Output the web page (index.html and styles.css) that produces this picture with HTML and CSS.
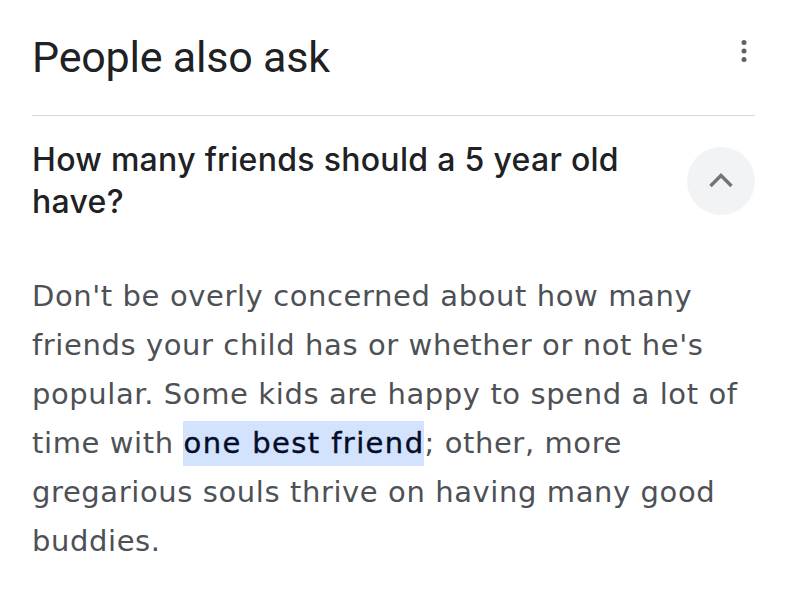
FILE: index.html
```html
<!DOCTYPE html>
<html lang="en">
<head>
<meta charset="utf-8">
<title>People also ask</title>
<link rel="stylesheet" href="styles.css">
</head>
<body>
<div class="paa">
  <div class="paa-head">
    <h2 class="paa-title">People also ask</h2>
    <button class="icon-btn more" aria-label="More options">
      <svg width="12" height="30" viewBox="0 0 12 30"><circle cx="6" cy="6.5" r="2.5"/><circle cx="6" cy="15" r="2.5"/><circle cx="6" cy="23.5" r="2.5"/></svg>
    </button>
  </div>
  <div class="divider"></div>
  <div class="question">
    <div class="q-text">How many friends should a 5 year old have?</div>
    <button class="toggle" aria-label="Collapse">
      <svg width="30" height="20" viewBox="0 0 30 20"><polyline points="4.5,15 15,4.5 25.5,15" fill="none" stroke="#70757a" stroke-width="3.4"/></svg>
    </button>
  </div>
  <p class="answer">Don't be overly concerned about how many friends your child has or whether or not he's popular. Some kids are happy to spend a lot of time with <span class="hl">one best friend</span>; other, more gregarious souls thrive on having many good buddies.</p>
</div>
</body>
</html>
```
FILE: styles.css
```css
html, body {
  margin: 0;
  padding: 0;
  background: #fff;
}
.paa {
  padding: 0 31px 0 32px;
  font-family: Roboto, "Noto Sans", sans-serif;
}
.paa-head {
  display: flex;
  align-items: center;
  justify-content: space-between;
  padding-top: 31px;
}
.paa-title {
  margin: 0;
  font-size: 43px;
  line-height: 52px;
  font-weight: 400;
  letter-spacing: -0.2px;
  color: #202124;
}
.icon-btn {
  border: 0;
  background: none;
  padding: 0;
  margin-right: 5px;
  margin-top: -12px;
  display: flex;
  fill: #5f6368;
}
.divider {
  height: 1px;
  background: #d6d8db;
  margin-top: 32px;
}
.question {
  display: flex;
  align-items: center;
  justify-content: space-between;
  gap: 40px;
  padding-top: 23px;
}
.q-text {
  font-family: Inter, Roboto, sans-serif;
  font-size: 32px;
  line-height: 42px;
  font-weight: 500;
  letter-spacing: 0.3px;
  color: #202124;
  flex: 1;
}
.toggle {
  width: 68px;
  height: 68px;
  border-radius: 50%;
  border: 0;
  background: #f1f3f4;
  padding: 0;
  display: flex;
  align-items: center;
  justify-content: center;
  flex: none;
}
.answer {
  margin: 49px 0 0;
  font-family: "DejaVu Sans", sans-serif;
  font-size: 29px;
  line-height: 49px;
  letter-spacing: 0.6px;
  color: #4d5156;
}
.hl {
  background: #d3e3fd;
  color: #040c28;
  letter-spacing: 1.4px;
  -webkit-text-stroke: 0.4px #040c28;
  padding: 5px 0 6px;
}
```
